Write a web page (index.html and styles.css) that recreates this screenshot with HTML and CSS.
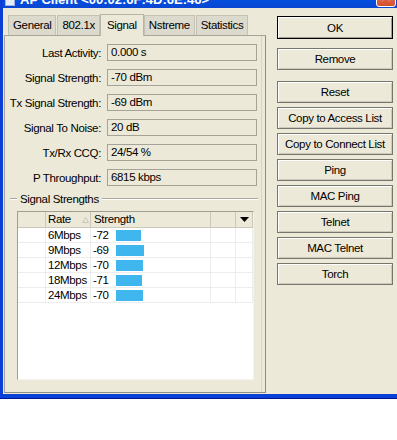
FILE: index.html
```html
<!doctype html>
<html lang="en">
  <head>
    <meta charset="UTF-8" />
    <title>AP Client</title>
    <link rel="stylesheet" href="styles.css">
  </head>
  <body>
    <div class="window">
      <div class="titlebar">
        <span class="title-icon"></span>
        <span class="title-text">AP Client &lt;00:02:6F:4D:6E:46&gt;</span>
        <span class="close-btn">&#x2715;</span>
      </div>

      <div class="main">
        <div class="left">
          <div class="tabs">
            <div class="tab">General</div>
            <div class="tab">802.1x</div>
            <div class="tab active">Signal</div>
            <div class="tab">Nstreme</div>
            <div class="tab">Statistics</div>
          </div>

          <div class="panel">
            <div class="fields">
              <div class="field-row">
                <span class="label">Last Activity:</span>
                <span class="value">0.000 s</span>
              </div>
              <div class="field-row">
                <span class="label">Signal Strength:</span>
                <span class="value">-70 dBm</span>
              </div>
              <div class="field-row">
                <span class="label">Tx Signal Strength:</span>
                <span class="value">-69 dBm</span>
              </div>
              <div class="field-row">
                <span class="label">Signal To Noise:</span>
                <span class="value">20 dB</span>
              </div>
              <div class="field-row">
                <span class="label">Tx/Rx CCQ:</span>
                <span class="value">24/54 %</span>
              </div>
              <div class="field-row">
                <span class="label">P Throughput:</span>
                <span class="value">6815 kbps</span>
              </div>
            </div>

            <div class="group-title">
              <span class="etch short"></span>
              <span class="group-text">Signal Strengths</span>
              <span class="etch"></span>
            </div>

            <div class="list">
              <div class="list-head">
                <span></span>
                <span class="col-rate">Rate
                  <svg class="sort-arrow" width="7" height="6" viewBox="0 0 7 6">
                    <polygon points="3.5,0.5 6.5,5.5 0.5,5.5" fill="none" stroke="#c9c6ba" />
                  </svg>
                </span>
                <span class="col-strength">Strength</span>
                <span></span>
                <span class="col-menu">
                  <svg width="9" height="5" viewBox="0 0 9 5">
                    <polygon points="0,0 9,0 4.5,5" fill="#000" />
                  </svg>
                </span>
              </div>

              <div class="list-row">
                <span></span><span class="rate">6Mbps</span>
                <span class="strength"><span class="num">-72</span><span class="bar" style="width: 25px"></span></span>
                <span></span><span></span>
              </div>
              <div class="list-row">
                <span></span><span class="rate">9Mbps</span>
                <span class="strength"><span class="num">-69</span><span class="bar" style="width: 28px"></span></span>
                <span></span><span></span>
              </div>
              <div class="list-row">
                <span></span><span class="rate">12Mbps</span>
                <span class="strength"><span class="num">-70</span><span class="bar" style="width: 27px"></span></span>
                <span></span><span></span>
              </div>
              <div class="list-row">
                <span></span><span class="rate">18Mbps</span>
                <span class="strength"><span class="num">-71</span><span class="bar" style="width: 26px"></span></span>
                <span></span><span></span>
              </div>
              <div class="list-row">
                <span></span><span class="rate">24Mbps</span>
                <span class="strength"><span class="num">-70</span><span class="bar" style="width: 27px"></span></span>
                <span></span><span></span>
              </div>
            </div>
          </div>
        </div>

        <div class="buttons">
          <button class="btn btn-default">OK</button>
          <button class="btn btn-remove">Remove</button>
          <button class="btn btn-reset">Reset</button>
          <button class="btn">Copy to Access List</button>
          <button class="btn">Copy to Connect List</button>
          <button class="btn">Ping</button>
          <button class="btn">MAC Ping</button>
          <button class="btn">Telnet</button>
          <button class="btn">MAC Telnet</button>
          <button class="btn">Torch</button>
        </div>
      </div>
    </div>
  </body>
</html>
```

FILE: styles.css
```css
* {
  margin: 0;
  padding: 0;
  box-sizing: border-box;
}

body {
  width: 397px;
  height: 440px;
  overflow: hidden;
  background: #fff;
  font-family: "Liberation Sans", Arial, sans-serif;
  font-size: 11.5px;
  letter-spacing: -0.35px;
  color: #000;
}

.window {
  width: 402px;
  margin-top: -22px;
  background: #ece9d8;
  border-left: 3px solid #0b3fd6;
  border-bottom: 4px solid #0841d6;
  box-shadow: 0 1px 0 #00159a;
}

/* title bar, mostly scrolled off the top */
.titlebar {
  height: 30px;
  display: flex;
  align-items: flex-end;
  padding: 0 0 1px 2px;
  background: linear-gradient(#0a63f0, #0053e6 60%, #0a46d2);
  color: #fff;
}

.title-icon {
  width: 10px;
  height: 12px;
  margin: 0 5px 1px 0;
  background: #e8ecf6;
  border: 1px solid #9fb3e8;
}

.title-text {
  font-weight: bold;
  font-size: 13px;
  letter-spacing: 0;
  line-height: 13px;
  margin-bottom: 1px;
  flex: 1;
}

.close-btn {
  width: 20px;
  height: 21px;
  margin-right: 6px;
  border: 1px solid #fff;
  border-radius: 3px;
  background: linear-gradient(#e88a6e, #d5502d);
  color: #fff;
  font-size: 14px;
  font-weight: bold;
  line-height: 19px;
  text-align: center;
}

.main {
  display: flex;
  height: 386px;
  padding: 7px 0 0 1px;
}

.left {
  width: 262px;
}

/* tabs */
.tabs {
  display: flex;
  align-items: flex-end;
  height: 20px;
  padding-left: 4px;
  gap: 1px;
}

.tab {
  height: 20px;
  padding: 0 4px;
  line-height: 19px;
  white-space: nowrap;
  background: #dcd9cd;
  border: 1px solid #c4c1b4;
  border-bottom: none;
}

.tab.active {
  height: 22px;
  margin: 0 -1px -1px;
  padding: 0 6px;
  line-height: 20px;
  background: #ece9d8;
  border-color: #b6b4a8;
  position: relative;
  z-index: 1;
}

.panel {
  height: 358px;
  border: 1px solid #a7a59a;
  border-right-color: #8f8d83;
  border-bottom-color: #8f8d83;
  box-shadow: inset -3px 0 0 #ece9d8, inset -4px 0 0 #d8d5c8;
  padding: 8px 0 0 0;
}

/* read-only fields */
.fields {
  display: flex;
  flex-direction: column;
  gap: 8px;
}

.field-row {
  display: flex;
  align-items: center;
  height: 17px;
}

.label {
  width: 96px;
  text-align: right;
  white-space: nowrap;
}

.value {
  width: 150px;
  height: 17px;
  margin-left: 6px;
  padding-left: 3px;
  line-height: 15px;
  border: 1px solid #a5a398;
}

/* group caption */
.group-title {
  display: flex;
  align-items: center;
  height: 13px;
  margin: 6px 7px 6px 5px;
}

.etch {
  flex: 1;
  height: 2px;
  border-top: 1px solid #aca899;
  border-bottom: 1px solid #fff;
}

.etch.short {
  flex: none;
  width: 7px;
}

.group-text {
  padding: 0 3px;
}

/* list */
.list {
  width: 237px;
  height: 169px;
  margin-left: 12px;
  background: #fff;
  border: 1px solid;
  border-color: #a09e92 #f4f3ee #f4f3ee #a09e92;
}

.list-head,
.list-row {
  display: grid;
  grid-template-columns: 28px 45px 120px 25px 17px;
}

.list-head {
  height: 16px;
  background: #ece9d8;
}

.list-head span {
  border-right: 1px solid #cbc8bb;
  border-bottom: 1px solid #cbc8bb;
  line-height: 15px;
  white-space: nowrap;
}

.col-rate {
  padding-left: 2px;
}

.sort-arrow {
  margin-left: 8px;
}

.col-strength {
  padding-left: 3px;
}

.col-menu {
  display: flex;
  align-items: center;
  justify-content: center;
}

.list-row {
  height: 15px;
}

.list-row span {
  border-right: 1px solid #ededed;
  border-bottom: 1px solid #ededed;
  line-height: 14px;
}

.list-row .rate {
  padding-left: 2px;
}

.list-row .strength {
  display: flex;
  align-items: center;
  padding-left: 2px;
}

.list-row .strength .num {
  width: 23px;
  border: none;
}

.list-row .strength .bar {
  height: 11px;
  margin-top: 1px;
  border: none;
  background: #3fb6ee;
}

/* buttons */
.buttons {
  width: 116px;
  margin-left: 11px;
  padding-top: 1px;
  display: flex;
  flex-direction: column;
  gap: 4px;
}

.btn {
  height: 22px;
  font-family: inherit;
  font-size: 11.5px;
  letter-spacing: -0.35px;
  color: #000;
  background: #ece9d8;
  border: 1px solid #77766c;
  box-shadow: inset 1px 1px 0 #fff, inset -1px -1px 0 #cdcabd;
}

.btn-default {
  height: 23px;
  border-color: #000;
  box-shadow: inset 1px 1px 0 #fff, inset -1px -1px 0 #a09e92;
}

.btn-remove {
  margin-top: 5px;
}

.btn-reset {
  margin-top: 7px;
}
```
